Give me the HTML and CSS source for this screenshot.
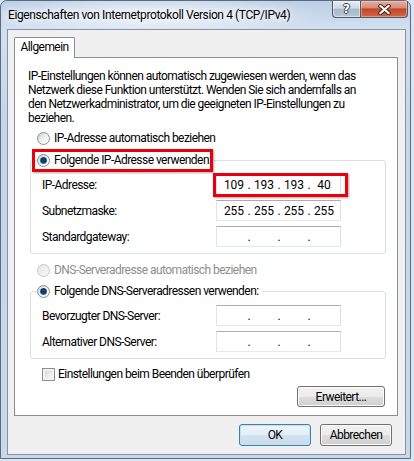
FILE: index.html
```html
<!DOCTYPE html>
<html lang="de">
<head>
    <meta charset="UTF-8">
    <title>Eigenschaften von Internetprotokoll Version 4 (TCP/IPv4)</title>
    <link rel="stylesheet" href="styles.css">
</head>
<body>
    <div class="window">
        <div class="titlebar">
            <span class="title">Eigenschaften von Internetprotokoll Version 4 (TCP/IPv4)</span>
            <div class="caption-buttons">
                <button class="cap help"><span>?</span></button>
                <button class="cap close">
                    <svg width="13" height="11" viewBox="0 0 13 11">
                        <path d="M2.5 2 L10.5 9 M10.5 2 L2.5 9" stroke="#43231c" stroke-width="4.2" stroke-linecap="square"/>
                        <path d="M2.5 2 L10.5 9 M10.5 2 L2.5 9" stroke="#fff" stroke-width="2.2" stroke-linecap="square"/>
                    </svg>
                </button>
            </div>
        </div>

        <div class="client">
            <div class="tabs">
                <div class="tab active">Allgemein</div>
            </div>

            <div class="tab-page">
                <p class="intro">IP-Einstellungen können automatisch zugewiesen werden, wenn das<br>Netzwerk diese Funktion unterstützt. Wenden Sie sich andernfalls an<br>den Netzwerkadministrator, um die geeigneten IP-Einstellungen zu<br>beziehen.</p>

                <label class="option"><input type="radio" name="ip">IP-Adresse automatisch beziehen</label>

                <fieldset class="group">
                    <legend>
                        <label class="option marked legend-mark"><input type="radio" name="ip" checked>Folgende IP-Adresse verwenden:</label>
                    </legend>
                    <div class="field">
                        <span class="field-label">IP-Adresse:</span>
                        <div class="ip marked ip-mark">
                            <span class="octet">109</span><span class="dot">.</span><span class="octet">193</span><span class="dot">.</span><span class="octet">193</span><span class="dot">.</span><span class="octet">40</span>
                        </div>
                    </div>
                    <div class="field">
                        <span class="field-label">Subnetzmaske:</span>
                        <div class="ip">
                            <span class="octet">255</span><span class="dot">.</span><span class="octet">255</span><span class="dot">.</span><span class="octet">255</span><span class="dot">.</span><span class="octet">255</span>
                        </div>
                    </div>
                    <div class="field">
                        <span class="field-label">Standardgateway:</span>
                        <div class="ip">
                            <span class="octet"></span><span class="dot">.</span><span class="octet"></span><span class="dot">.</span><span class="octet"></span><span class="dot">.</span><span class="octet"></span>
                        </div>
                    </div>
                </fieldset>

                <label class="option option-dns disabled"><input type="radio" name="dns" disabled>DNS-Serveradresse automatisch beziehen</label>

                <fieldset class="group group-dns">
                    <legend>
                        <label class="option"><input type="radio" name="dns" checked>Folgende DNS-Serveradressen verwenden:</label>
                    </legend>
                    <div class="field">
                        <span class="field-label">Bevorzugter DNS-Server:</span>
                        <div class="ip">
                            <span class="octet"></span><span class="dot">.</span><span class="octet"></span><span class="dot">.</span><span class="octet"></span><span class="dot">.</span><span class="octet"></span>
                        </div>
                    </div>
                    <div class="field">
                        <span class="field-label">Alternativer DNS-Server:</span>
                        <div class="ip">
                            <span class="octet"></span><span class="dot">.</span><span class="octet"></span><span class="dot">.</span><span class="octet"></span><span class="dot">.</span><span class="octet"></span>
                        </div>
                    </div>
                </fieldset>

                <label class="check"><input type="checkbox">Einstellungen beim Beenden überprüfen</label>

                <button class="btn btn-advanced">Erweitert...</button>
            </div>

            <div class="dialog-buttons">
                <button class="btn default">OK</button>
                <button class="btn">Abbrechen</button>
            </div>
        </div>
    </div>
</body>
</html>
```

FILE: styles.css
```css
body {
    margin: 0;
    background: #d9e5f2;
    font-family: Roboto, "Noto Sans", sans-serif;
    font-size: 12px;
    letter-spacing: -0.55px;
    color: #000;
}

/* window frame (aero glass) */
.window {
    width: 411px;
    height: 459px;
    box-sizing: border-box;
    border: 1px solid #5d6a7c;
    border-radius: 7px 7px 0 0;
    padding: 0 4px 3px 6px;
    display: flex;
    flex-direction: column;
    background:
        radial-gradient(ellipse 170px 22px at 150px 14px, rgba(255,255,255,0.75), rgba(255,255,255,0) 100%),
        linear-gradient(180deg, #bccfe6 0, #d2e0f0 28px, #c4d6eb 120px, #c9d9ec 100%);
}
.titlebar {
    height: 28px;
    display: flex;
    align-items: flex-start;
}
.title {
    margin: 6px 0 0 1px;
    line-height: 16px;
    letter-spacing: -0.4px;
    text-shadow: 0 0 6px #fff, 0 0 10px #fff;
}
.caption-buttons {
    margin-left: auto;
    margin-right: -2px;
    display: flex;
}
.cap {
    height: 17px;
    padding: 0;
    border: 1px solid #4d5a6d;
    border-top: none;
    display: flex;
    align-items: center;
    justify-content: center;
    font-family: "DejaVu Sans", sans-serif;
}
.help {
    width: 28px;
    border-right: none;
    border-radius: 0 0 0 4px;
    background: linear-gradient(180deg, #e4ebf3 0, #cfdae6 45%, #a9b8ca 50%, #b8c6d6 100%);
    box-shadow: inset 0 0 0 1px rgba(255,255,255,0.45);
}
.help span {
    color: #fff;
    font-weight: bold;
    font-size: 12px;
    line-height: 12px;
    text-shadow: -1px 0 #3a4658, 1px 0 #3a4658, 0 -1px #3a4658, 0 1px #3a4658;
}
.close {
    width: 48px;
    border-radius: 0 0 4px 0;
    background: linear-gradient(180deg, #e8ae9f 0, #d88a77 42%, #c3452d 50%, #d5673f 100%);
    box-shadow: inset 0 0 0 1px rgba(255,220,210,0.4);
}

/* client area */
.client {
    flex: 1;
    display: flex;
    flex-direction: column;
    background: #f0f0f0;
    border: 1px solid #8793a3;
    padding: 7px 7px 0 6px;
}
.tabs {
    display: flex;
    height: 20px;
}
.tab {
    width: 61px;
    height: 20px;
    box-sizing: border-box;
    border: 1px solid #898c95;
    border-bottom: none;
    border-radius: 2px 2px 0 0;
    text-align: center;
    line-height: 19px;
    position: relative;
    z-index: 1;
}
.tab.active {
    height: 21px;
    background: #fff;
}
.tab-page {
    flex: 1;
    display: flex;
    flex-direction: column;
    background: #fff;
    border: 1px solid #898c95;
    padding: 11px 11px 0 13px;
}
.intro {
    margin: 0;
    line-height: 14px;
    white-space: nowrap;
}

/* radio buttons and check boxes */
.option, .check {
    display: flex;
    align-items: center;
    height: 16px;
    gap: 4px;
    white-space: nowrap;
}
.option {
    margin: 5px 0 0 9px;
}
.option.disabled {
    color: #8d8d8d;
}
.option-dns {
    margin-top: 8px;
}
input[type="radio"] {
    appearance: none;
    margin: 0;
    width: 13px;
    height: 13px;
    flex: none;
    border: 1px solid #8b8d8f;
    border-radius: 50%;
    background: linear-gradient(135deg, #cfd1d3 0, #f1f2f3 55%, #ffffff 100%);
    position: relative;
}
input[type="radio"]:checked::after {
    content: "";
    position: absolute;
    inset: 2px;
    border-radius: 50%;
    background: radial-gradient(circle at 50% 45%, #1b4b78 0, #0e3458 45%, #4f9fd6 80%, #a3d4f2 100%);
}
input[type="radio"]:disabled {
    border-color: #c6c7c8;
    background: linear-gradient(135deg, #e6e6e6, #f8f8f8);
}
.check {
    margin: 7px 0 0 14px;
    gap: 3px;
}
input[type="checkbox"] {
    appearance: none;
    margin: 0;
    width: 13px;
    height: 13px;
    flex: none;
    border: 1px solid #8f8f8f;
    background: linear-gradient(135deg, #c9cbcd 0, #eeeeee 60%, #f9f9f9 100%);
    box-shadow: inset 0 0 0 2px #f2f2f2;
}

/* group boxes */
.group {
    margin: 6px 0 0 2px;
    padding: 6px 6px 6px 6px;
    border: 1px solid #d5dfe5;
    border-radius: 3px;
}
.group-dns {
    margin-top: 5px;
}
.group legend {
    padding: 0 3px 0 0;
    line-height: 16px;
}
.group legend .option {
    margin: 0;
}
.field {
    display: flex;
    align-items: center;
    height: 21px;
    padding-left: 5px;
}
.field + .field {
    margin-top: 5px;
}
.field-label {
    width: 174px;
}
.ip {
    width: 125px;
    height: 21px;
    box-sizing: border-box;
    display: flex;
    align-items: center;
    padding-left: 5px;
    background: #fff;
    border: 1px solid;
    border-color: #abadb3 #dbdfe6 #e3e9ef #e2e3ea;
    letter-spacing: 0;
}
.octet {
    width: 24px;
    text-align: center;
}
.dot {
    width: 6px;
    text-align: center;
}

/* red highlight frames drawn over the controls */
.marked {
    position: relative;
}
.marked::after {
    content: "";
    position: absolute;
    border: 3px solid #e8000b;
    box-shadow: 1px 1px 2px rgba(0,0,0,0.35);
    pointer-events: none;
}
.legend-mark::after {
    left: -5px;
    right: -2px;
    top: -3px;
    bottom: -4px;
}
.ip-mark::after {
    left: -4px;
    right: -8px;
    top: -2px;
    bottom: -3px;
}

/* push buttons */
.btn {
    font: inherit;
    letter-spacing: inherit;
    color: #000;
    padding: 0;
    border: 1px solid #707070;
    border-radius: 3px;
    background: linear-gradient(180deg, #f2f2f2 0, #ebebeb 50%, #dddddd 51%, #cfcfcf 100%);
    box-shadow: inset 0 0 0 1px #fcfcfc;
}
.btn-advanced {
    align-self: flex-end;
    width: 88px;
    height: 21px;
    margin: 4px 1px 0 0;
}
.dialog-buttons {
    display: flex;
    justify-content: flex-end;
    gap: 9px;
    padding: 8px 6px 8px 0;
}
.dialog-buttons .btn {
    width: 72px;
    height: 22px;
}
.btn.default {
    border-color: #3c7fb1;
    background: linear-gradient(180deg, #eef5fa 0, #e4eef6 50%, #d4e3ef 51%, #c9dbe9 100%);
    box-shadow: inset 0 0 0 1px #bfe3f8;
}
```
